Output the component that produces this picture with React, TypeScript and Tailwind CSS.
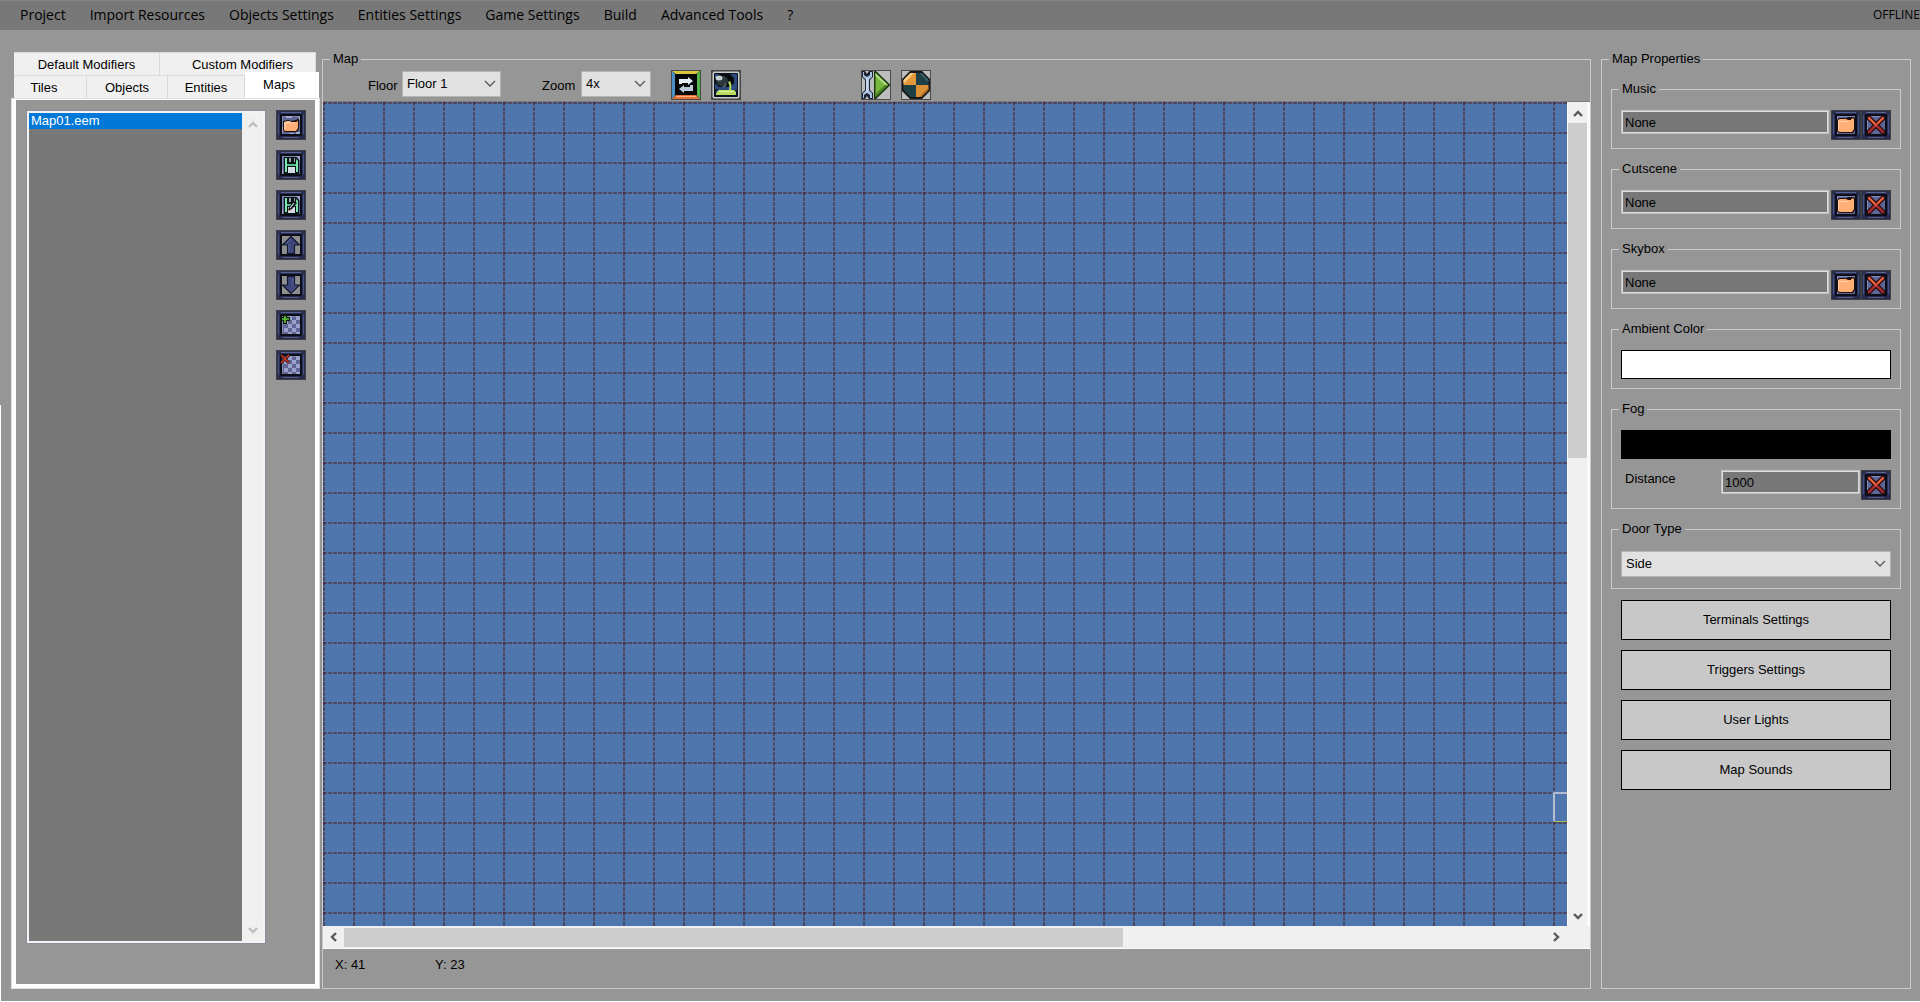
import React, { useId, useState } from "react";

const MENU = [
  "Project",
  "Import Resources",
  "Objects Settings",
  "Entities Settings",
  "Game Settings",
  "Build",
  "Advanced Tools",
  "?",
];

/* ---------- icons ---------- */

function Frame({ children, hollow = false }: { children?: React.ReactNode; hollow?: boolean }) {
  return (
    <svg viewBox="0 0 30 30" className="block size-[30px]" aria-hidden="true">
      <rect width="30" height="30" fill="#3d3e42" />
      <rect x="1" y="1" width="28" height="28" fill="#2b3150" />
      <path d="M5 2h20v1H5z" fill="#56619a" />
      <path d="M2 5h1v19H2zM27 5h1v19h-1z" fill="#465084" />
      <path d="M1 25l3 1h22l3-1v4H1z" fill="#252b48" />
      <path d="M7 27h16v1H7z" fill="#4e5990" />
      <rect x="4" y="4" width="22" height="22" rx="1" fill="#0b0d18" />
      <rect x="6" y="6" width="18" height="18" fill={hollow ? "#8f8f8f" : "#5f6696"} />
      {!hollow && <path d="M6 6h18v1H7v17H6z" fill="#7f87b4" />}
      {children}
    </svg>
  );
}

function FolderIcon({ small = false }: { small?: boolean }) {
  return (
    <Frame>
      {small ? (
        <>
          <path d="M10 6h6v2h-6zM20 22h4v2h-4zM6 17h2v5H6zM13 23h5v1h-5zM22 7h2v3h-2z" fill="#a3a9cc" />
          <path d="M7 11l6-1 2 1 5-1 3-2v11l-2 3H8l-1-2z" fill="#20100c" />
          <path d="M8 12l5-1 2 1h5l2-1v7l-2 3H9l-1-1z" fill="#ffaf75" />
          <path d="M8 12l5-1 2 1h4v1l-9 1v5H8z" fill="#ffcaa0" />
        </>
      ) : (
        <>
          <path d="M6 10l2-2h7l2-1h5l2 1v12l-2 3H8l-2-2z" fill="#20100c" />
          <path d="M7 10l2-1h6l2 1h3l1-2 2 1v10l-2 3H9l-2-1z" fill="#ffaf75" />
          <path d="M7 11h10v1H8v7H7z" fill="#ffd2ac" />
        </>
      )}
    </Frame>
  );
}

function CrossIcon() {
  return (
    <Frame>
      <path d="M8 8l14 14M22 8L8 22" stroke="#220a10" strokeWidth="5" strokeLinecap="round" />
      <path d="M8 8l14 14M22 8L8 22" stroke="#a02c2c" strokeWidth="2.600" strokeLinecap="round" />
      <path d="M8 8l7 7M22 8l-5 5" stroke="#e8663a" strokeWidth="1.800" strokeLinecap="round" />
    </Frame>
  );
}

function SaveIcon({ as = false }: { as?: boolean }) {
  return (
    <Frame>
      <path d="M21 6h3v4h-1zM6 20h1v4H6z" fill="#a3a9cc" />
      <path d="M8 7h12l3 3v14H8z" fill="#081512" />
      <path d="M9 8h2v14H9zM20 9l2 2v11h-2z" fill="#79e6b0" />
      <path d="M11 14h9v2h-9z" fill="#4fbf8c" />
      <path d="M13 8h2v4h-2zM18 8h1v4h-1z" fill="#9aa0b8" />
      <rect x="12" y="17" width="7" height="6" fill="#d6d8e6" />
      {as && (
        <>
          <path d="M18 11l3 2-5 6-4 2 1-4z" fill="#10151c" />
          <path d="M18 13l-4 5" stroke="#cfd3e0" strokeWidth="1.200" />
          <path d="M12 21l3-1" stroke="#e0a060" strokeWidth="1" />
        </>
      )}
    </Frame>
  );
}

function ArrowIcon({ down = false }: { down?: boolean }) {
  return (
    <Frame hollow>
      <g transform={down ? "rotate(180 15 15)" : undefined}>
        <path d="M15 6.500L23.500 15h-5v8.500h-7V15h-5z" fill="#3d477a" stroke="#14182e" strokeWidth="1.200" />
        <path d="M14.500 9L10 13.500M13 14v8" stroke="#5b67a2" strokeWidth="1" />
      </g>
    </Frame>
  );
}

function CheckerIcon({ remove = false }: { remove?: boolean }) {
  const cells: [number, number][] = [
    [12, 6], [20, 6], [8, 10], [16, 10], [12, 14], [20, 14], [8, 18], [16, 18], [12, 22], [20, 22],
  ];
  return (
    <Frame>
      {cells.map(([x, y]) => (
        <rect key={`${x}-${y}`} x={x} y={y} width="4" height={y === 22 ? 2 : 4} fill="#9ba1c8" />
      ))}
      {remove ? (
        <>
          <path d="M5 5l8 8M13 5l-8 8" stroke="#2a0c0c" strokeWidth="3" />
          <path d="M5 5l8 8M13 5l-8 8" stroke="#c8382a" strokeWidth="1.600" />
        </>
      ) : (
        <>
          <path d="M9 4v10M4 9h10" stroke="#0c1c08" strokeWidth="4" />
          <path d="M9 6v7M6 9h7" stroke="#62c83c" strokeWidth="1.600" />
        </>
      )}
    </Frame>
  );
}

function SwapIcon() {
  return (
    <svg viewBox="0 0 30 30" className="block size-[30px]" aria-hidden="true">
      <rect width="30" height="30" fill="#4a4a46" />
      <path d="M1 1h28l-4 3H5z" fill="#d9c53e" />
      <path d="M1 1l3 3v21l-3 4z" fill="#4a8fc8" />
      <path d="M29 1l-3 3v21l3 4z" fill="#4fb848" />
      <path d="M1 29l4-4h20l4 4z" fill="#e2703a" />
      <path d="M5 26h20v1H5z" fill="#ffb07a" />
      <rect x="4" y="4" width="22" height="21" fill="#050608" />
      <path d="M8 14V9h9V7l5 4-5 4v-2h-6v1z" fill="#e6eef5" />
      <path d="M22 15v6h-9v2l-5-4 5-4v2h6v-2z" fill="#bccbd8" />
    </svg>
  );
}

function BucketIcon() {
  return (
    <svg viewBox="0 0 30 30" className="block size-[30px]" aria-hidden="true">
      <rect width="30" height="30" fill="#444" />
      <rect x="1.500" y="1.500" width="27" height="27" rx="2" fill="#c8cccc" />
      <rect x="3" y="3" width="24" height="24" rx="1" fill="#0b1220" />
      <rect x="4" y="4" width="22" height="18" fill="#2c4a7c" />
      <path d="M4 8l4-4h11l4 4v5l-4 4H8l-4-4z" fill="#070b10" />
      <ellipse cx="11" cy="11" rx="6" ry="5" fill="#2c3a3e" />
      <ellipse cx="8" cy="8" rx="3.500" ry="2.500" fill="#c6d2d4" />
      <path d="M15 13q1 3-2 4H9q5 0 6-4z" fill="#7b8c90" />
      <path d="M17 12l2-1q2 3 1 9h3l2 2v3H5v-2l3-3h10q1-5-1-8z" fill="#b8dc62" />
      <path d="M8 21h14l1 1H7z" fill="#e2f29c" />
      <path d="M4 19h3l-3 3zM26 20v3l-2-3z" fill="#11180d" />
    </svg>
  );
}

function BuildIcon() {
  return (
    <svg viewBox="0 0 30 30" className="block size-[30px]" aria-hidden="true">
      <rect width="30" height="30" fill="#4b4b4b" />
      <rect x="1" y="1" width="28" height="28" fill="#bdbdbd" />
      <path d="M1 1h3l2 3 2-3h4v6L9 10v10l3 3v6H8l-2-3-2 3H1v-6l3-3V10L1 7z" fill="#1a2234" />
      <path d="M2 2h1v3l3 2 3-2V2h2v5L8 9.500v11l3 2.500v5H9v-3l-3-2-3 2v3H2v-5l3-2.500v-11L2 7z" fill="#aabfe0" />
      <path d="M6 8v14" stroke="#e9f0fa" strokeWidth="1" />
      <path d="M13 1h2l14.500 14L15 29h-2z" fill="#1b3a10" />
      <path d="M14.500 3l12.500 12-12.500 12z" fill="#79b63e" />
      <path d="M14.500 3l12.500 12h-3L14.500 6z" fill="#b3dd83" />
      <path d="M14.500 27L27 15h-3l-9.500 9z" fill="#4c8525" />
      <path d="M0 0h30v30H0zM1 1v28h28V1z" fill="#4b4b4b" fillRule="evenodd" />
    </svg>
  );
}

function TargetIcon() {
  return (
    <svg viewBox="0 0 30 30" className="block size-[30px]" aria-hidden="true">
      <rect width="30" height="30" fill="#4b4b4b" />
      <rect x="1" y="1" width="28" height="28" fill="#bdbdbd" />
      <path d="M9 1h12l8 8v12l-8 8H9l-8-8V9z" fill="#15181a" />
      <path d="M9.500 3H15v12H2.500v-5z" fill="#e3993a" />
      <path d="M9.500 3H13L3.500 13h-1v-3z" fill="#f7cf85" />
      <path d="M20.500 3H15v12h12.500v-5z" fill="#1f4046" />
      <path d="M20.500 3h-2l9 9v-2z" fill="#3e7078" />
      <path d="M9.500 27H15V15H2.500v5z" fill="#203f45" />
      <path d="M20.500 27H15V15h12.500v5z" fill="#d98f36" />
      <path d="M20.500 27l7-7v-2l-9 9z" fill="#9b5f1c" />
    </svg>
  );
}

function Chevron({ dir }: { dir: "up" | "down" | "left" | "right" }) {
  const d = {
    up: "M1 8l4-4 4 4",
    down: "M1 3l4 4 4-4",
    left: "M7 1L3 5l4 4",
    right: "M3 1l4 4-4 4",
  }[dir];
  return (
    <svg viewBox="0 0 10 10" className="size-[10px]" fill="none" stroke="currentColor" strokeWidth="2.400" aria-hidden="true">
      <path d={d} />
    </svg>
  );
}

/* ---------- controls ---------- */

function IconButton({ label, children }: { label: string; children: React.ReactNode }) {
  return (
    <button type="button" aria-label={label} title={label} className="block size-[30px] shrink-0">
      {children}
    </button>
  );
}

function Select({ id, options, label, className = "" }: { id: string; options: string[]; label?: string; className?: string }) {
  return (
    <div className={`relative ${className}`}>
      <select
        id={id}
        aria-label={label}
        className="block h-[26px] w-full appearance-none border border-[#b4b4b4] bg-[#e1e1e1] pl-1 pr-6 text-[13px] text-black"
      >
        {options.map((o) => (
          <option key={o}>{o}</option>
        ))}
      </select>
      <svg viewBox="0 0 12 8" className="pointer-events-none absolute right-[5px] top-[9px] h-2 w-3" fill="none" stroke="#555" strokeWidth="1.300" aria-hidden="true">
        <path d="M1 1l5 5 5-5" />
      </svg>
    </div>
  );
}

function Group({ title, inner = false, className = "", children }: { title: string; inner?: boolean; className?: string; children: React.ReactNode }) {
  return (
    <fieldset className={`min-w-0 border border-[#cbcbcb] ${className}`}>
      <legend className={`h-5 px-[3px] leading-5 ${inner ? "-ml-[2px]" : "ml-[7px]"}`}>{title}</legend>
      {children}
    </fieldset>
  );
}

const FIELD = "h-6 min-w-0 flex-1 border-2 border-[#dcdcdc] bg-[#787878] pl-[2px] text-[13px] text-black outline outline-1 -outline-offset-1 outline-[#8a8a8a]/30";

function FileGroup({ title }: { title: string }) {
  return (
    <Group inner title={title} className="px-[9px] pb-[8px] pt-[11px]">
      <div className="flex items-start">
        <input aria-label={title} defaultValue="None" className={FIELD} />
        <div className="ml-[2px] flex">
          <IconButton label={`Open ${title}`}><FolderIcon /></IconButton>
          <IconButton label={`Clear ${title}`}><CrossIcon /></IconButton>
        </div>
      </div>
    </Group>
  );
}

/* ---------- panels ---------- */

function Tab({ label, active = false, onClick, className = "" }: { label: string; active?: boolean; onClick: () => void; className?: string }) {
  return (
    <button
      type="button"
      role="tab"
      aria-selected={active}
      onClick={onClick}
      className={`${active ? "-mr-[3px] -mt-[3px] h-[26px] bg-white" : "h-[23px] border-r border-t border-[#d9d9d9] bg-[#f0f0f0] pt-px"} ${className}`}
    >
      {label}
    </button>
  );
}

function LeftPanel() {
  const [tab, setTab] = useState("Maps");
  const t = (label: string, className: string) => (
    <Tab label={label} active={tab === label} onClick={() => setTab(label)} className={className} />
  );
  return (
    <aside className="flex w-[309px] shrink-0 flex-col pt-[3px]">
      <div role="tablist" className="ml-[3px] mr-[4px]">
        <div className="flex">
          {t("Default Modifiers", "flex-1")}
          {t("Custom Modifiers", "flex-1 pl-[10px]")}
        </div>
        <div className="flex">
          {t("Tiles", "w-[73px] pr-3")}
          {t("Objects", "w-[81px]")}
          {t("Entities", "w-[77px]")}
          {t("Maps", "flex-1 pr-[6px]")}
        </div>
      </div>
      <div className="flex flex-1 border-b-[5px] border-l-[5px] border-r-[5px] border-t-2 border-white pb-[41px] pl-[11px] pr-[9px] pt-[11px] outline outline-1 -outline-offset-1 outline-[#e0e0e0]">
        <div className="flex flex-1 border-2 border-[#f4f4f4] outline outline-1 outline-[#8b8f9c]">
          <ul role="listbox" aria-label="Maps" className="flex-1 bg-[#787878]">
            <li role="option" aria-selected="true" className="h-4 bg-[#0078d7] pl-[2px] leading-4 text-white">
              Map01.eem
            </li>
          </ul>
          <div className="flex w-[21px] flex-col items-center justify-between bg-[#f0f0f0] py-[6px] text-[#bfbfbf]">
            <Chevron dir="up" />
            <Chevron dir="down" />
          </div>
        </div>
        <div className="-mt-px ml-[11px] flex flex-col gap-[10px]">
          <IconButton label="Open map"><FolderIcon small /></IconButton>
          <IconButton label="Save map"><SaveIcon /></IconButton>
          <IconButton label="Save map as"><SaveIcon as /></IconButton>
          <IconButton label="Move up"><ArrowIcon /></IconButton>
          <IconButton label="Move down"><ArrowIcon down /></IconButton>
          <IconButton label="Add map"><CheckerIcon /></IconButton>
          <IconButton label="Remove map"><CheckerIcon remove /></IconButton>
        </div>
      </div>
    </aside>
  );
}

function MapCanvas() {
  return (
    <svg className="absolute inset-0 size-full" aria-label="Map grid">
      <defs>
        <pattern id="grid" width="30" height="30" patternUnits="userSpaceOnUse">
          <rect width="30" height="30" fill="#4f76ad" />
          <path d="M0 1h30M1 0v30" stroke="#4d4560" strokeWidth="2" strokeDasharray="4 1" opacity="0.950" />
          <rect width="2" height="2" fill="#4a2c40" />
        </pattern>
      </defs>
      <rect width="100%" height="100%" fill="url(#grid)" />
      <path d="M1260 691h-29v28" fill="none" stroke="#d5dfee" strokeWidth="1.500" />
      <path d="M1231 719.500h29" stroke="#a9bf5a" strokeWidth="1" />
    </svg>
  );
}

function MapPanel() {
  const id = useId();
  return (
    <Group title="Map" className="flex flex-1 flex-col">
      <div className="flex items-start pb-px pl-[45px] pt-px">
        <label htmlFor={`${id}f`} className="w-[34px] pt-[6px]">Floor</label>
        <Select id={`${id}f`} options={["Floor 1"]} className="mt-px w-[99px]" />
        <label htmlFor={`${id}z`} className="ml-[41px] w-[39px] pt-[6px]">Zoom</label>
        <Select id={`${id}z`} options={["4x"]} className="mt-px w-[70px]" />
        <div className="ml-5 flex gap-[10px]">
          <IconButton label="Swap"><SwapIcon /></IconButton>
          <IconButton label="Fill"><BucketIcon /></IconButton>
        </div>
        <div className="ml-[120px] flex gap-[10px]">
          <IconButton label="Build and run"><BuildIcon /></IconButton>
          <IconButton label="Target"><TargetIcon /></IconButton>
        </div>
      </div>
      <div className="grid flex-1 grid-cols-[1fr_23px] grid-rows-[1fr_22px] border-b border-t border-b-[#fafafa] border-t-[#7c7c7c] bg-[#f0f0f0] text-[#5a5a5a]">
        <div className="relative overflow-hidden">
          <MapCanvas />
        </div>
        <div className="flex flex-col items-center border-l border-r-[3px] border-[#fafafa]">
          <div className="flex h-[21px] items-center"><Chevron dir="up" /></div>
          <div className="h-[335px] w-[19px] bg-[#cdcdcd]" />
          <div className="flex flex-1 items-end pb-[5px]"><Chevron dir="down" /></div>
        </div>
        <div className="flex items-center">
          <div className="flex w-[21px] justify-center"><Chevron dir="left" /></div>
          <div className="h-[19px] w-[779px] bg-[#cdcdcd]" />
          <div className="flex flex-1 justify-end pr-[6px]"><Chevron dir="right" /></div>
        </div>
      </div>
      <div className="flex h-[39px] pl-3 pt-[6px]">
        <span className="w-[100px]">X: 41</span>
        <span>Y: 23</span>
      </div>
    </Group>
  );
}

function PropertiesPanel() {
  const id = useId();
  return (
    <Group title="Map Properties" className="w-[310px] shrink-0">
      <div className="flex flex-col gap-[10px] px-[9px] pt-[10px]">
        <FileGroup title="Music" />
        <FileGroup title="Cutscene" />
        <FileGroup title="Skybox" />
        <Group inner title="Ambient Color" className="px-[9px] pb-[9px] pt-[11px]">
          <button type="button" aria-label="Ambient color" className="block h-[29px] w-full border border-black bg-white" />
        </Group>
        <Group inner title="Fog" className="px-[9px] pb-[8px] pt-[11px]">
          <button type="button" aria-label="Fog color" className="block h-[29px] w-full bg-black" />
          <div className="mt-[11px] flex items-start">
            <label htmlFor={`${id}d`} className="w-[100px] pl-1 leading-[18px]">Distance</label>
            <input id={`${id}d`} defaultValue="1000" className={FIELD} />
            <div className="ml-px"><IconButton label="Clear distance"><CrossIcon /></IconButton></div>
          </div>
        </Group>
        <Group inner title="Door Type" className="px-[9px] pb-[11px] pt-[12px]">
          <Select id={`${id}t`} label="Door Type" options={["Side"]} />
        </Group>
        <div className="flex flex-col gap-[10px] px-[10px] pt-px">
          {["Terminals Settings", "Triggers Settings", "User Lights", "Map Sounds"].map((b) => (
            <button key={b} type="button" className="h-10 border border-black bg-[#c8c8c8]">
              {b}
            </button>
          ))}
        </div>
      </div>
    </Group>
  );
}

export default function App() {
  return (
    <div className="relative flex min-h-screen flex-col border-b border-white bg-[#969696] font-['Liberation_Sans',Arial,sans-serif] text-[13px] text-black">
      <div className="absolute bottom-0 left-0 top-[405px] w-px bg-white" />
      <header className="flex h-[30px] items-center justify-between border-t border-[#858585] bg-[#787878] pb-[2px] pl-5 font-['Open_Sans',sans-serif]">
        <nav className="flex gap-6 text-[14px]">
          {MENU.map((m) => (
            <button key={m} type="button">{m}</button>
          ))}
        </nav>
        <span className="text-[12px]">OFFLINE</span>
      </header>
      <main className="flex flex-1 pb-[12px] pl-[11px] pr-[9px] pt-[19px]">
        <LeftPanel />
        <div className="ml-[2px] flex min-w-0 flex-1 gap-[10px]">
          <MapPanel />
          <PropertiesPanel />
        </div>
      </main>
    </div>
  );
}
